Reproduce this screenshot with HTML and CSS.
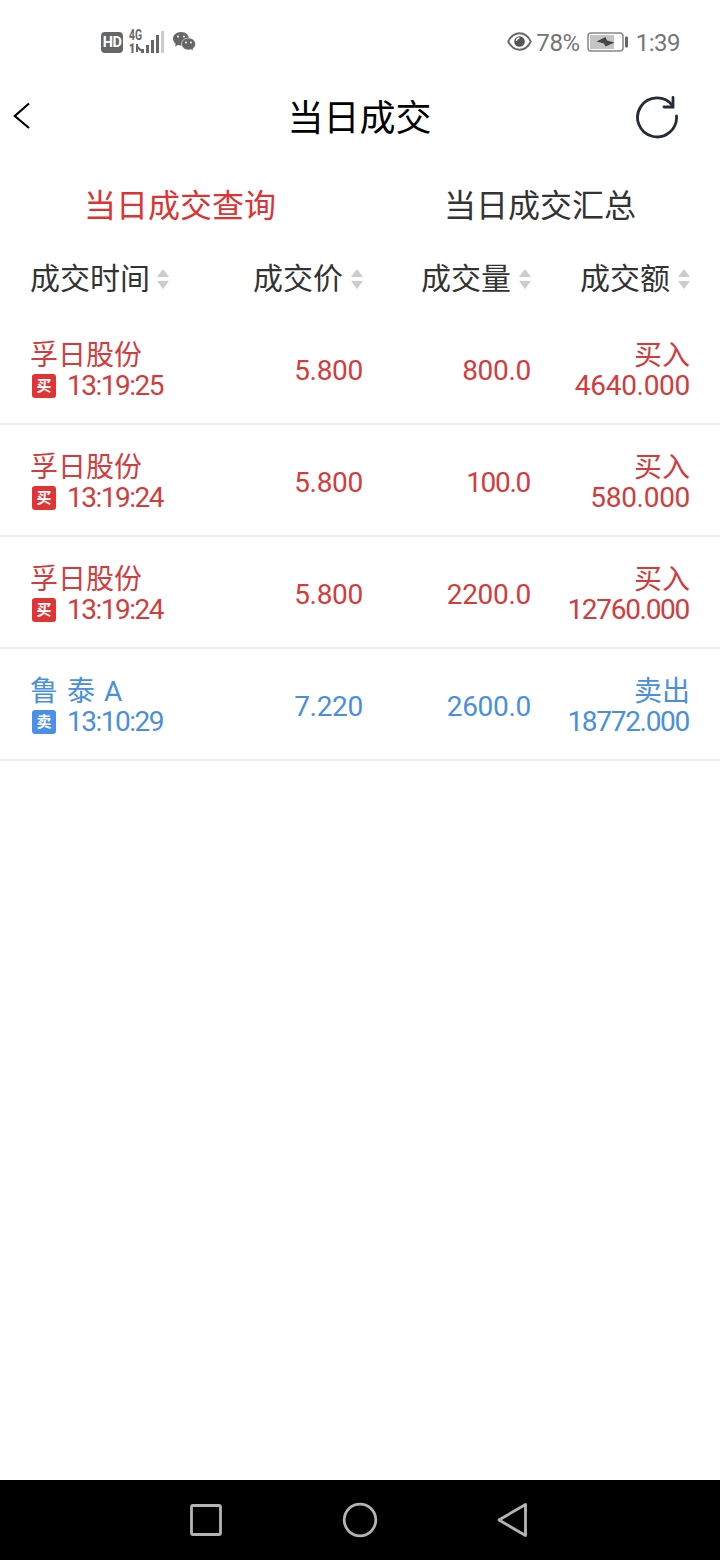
FILE: index.html
```html
<!DOCTYPE html>
<html lang="zh-CN">
<head>
	<meta charset="utf-8">
	<title>当日成交</title>
	<link rel="stylesheet" href="styles.css">
</head>
<body>
	<div class="page">
		<div class="status">
			<div class="status-left">
				<span class="hd">HD</span>
				<svg class="signal" width="36" height="32" viewBox="0 -3 36 32">
					<text class="net" x="0" y="11" textLength="13" lengthAdjust="spacingAndGlyphs">4G</text>
					<path d="M1 17L3.500 15.500V24M8 15V23M8 17.500L12 21.500" fill="none" stroke="#666" stroke-width="2"/>
					<path d="M12 20h3v4h-3zM17 16h3v8h-3zM22 11h3v13h-3zM27 6h3v18h-3z" fill="#666"/>
					<path d="M32 2h3v22h-3z" fill="#ccc"/>
				</svg>
				<svg class="wechat" width="24" height="22" viewBox="0 0 24 22">
					<path d="M9 1C4.300 1 1 4 1 7.700c0 2 1 3.800 2.700 5L3 15.500l3-1.500c1 .3 2 .4 3 .4 4.500 0 8-2.800 8-6.700S13.500 1 9 1z" fill="#666"/>
					<path d="M16.500 7C12.500 7 9.500 9.800 9.500 13s3 6 7 6c.9 0 1.700-.1 2.500-.4l2.500 1.400-.6-2.300C22.500 16.500 23.500 15 23.500 13c0-3.200-3-6-7-6z" fill="#666" stroke="#fff" stroke-width=".6"/>
					<g fill="#fff"><circle cx="6" cy="5.500" r="1"/><circle cx="12" cy="5.500" r="1"/><circle cx="14" cy="11.500" r=".9"/><circle cx="19" cy="11.500" r=".9"/></g>
				</svg>
			</div>
			<div class="status-right">
				<svg width="25" height="20" viewBox="0 0 25 20">
					<path d="M1.200 9.500C6.500-1.500 18.500-1.500 23.800 9.500C18.500 20.500 6.500 20.500 1.200 9.500z" fill="none" stroke="#666" stroke-width="1.800"/>
					<circle cx="12.500" cy="9.500" r="5.300" fill="#555"/>
					<path d="M12.500 6A3.300 3.300 0 0 0 9.300 9" fill="none" stroke="#fff" stroke-width="1.300"/>
				</svg>
				<span class="percent">78%</span>
				<svg class="battery" width="42" height="20" viewBox="0 0 42 20">
					<rect x="1" y="1" width="35" height="18" rx="3" fill="none" stroke="#888" stroke-width="1.500"/>
					<path d="M3 3h24v14h-24z" fill="#c4c4c4"/>
					<path d="M9.500 9.500L18.500 5L20 8.500L27.500 10.500L18.500 14.500L17 11.500z" fill="#444"/>
					<rect x="38" y="4.500" width="3" height="11" rx="1" fill="#666"/>
				</svg>
				<span class="clock">1:39</span>
			</div>
		</div>

		<div class="navbar">
			<svg class="back" width="20" height="30" viewBox="0 0 20 30">
				<path d="M18 1.500L3.800 14L18 26" fill="none" stroke="#000" stroke-width="2.200"/>
			</svg>
			<div class="title">当日成交</div>
			<svg class="refresh" width="44" height="44" viewBox="0 0 44 44">
				<path d="M41.500 21A19.500 19.500 0 1 1 37.500 10.500" fill="none" stroke="#222b36" stroke-width="2.800" stroke-linecap="round"/>
				<path d="M38 2.500V12H29" fill="none" stroke="#222b36" stroke-width="2.800" stroke-linecap="round"/>
			</svg>
		</div>

		<div class="tabs">
			<div class="tab active">当日成交查询</div>
			<div class="tab">当日成交汇总</div>
		</div>

		<div class="cols head">
			<div>成交时间<span class="sort"></span></div>
			<div class="right">成交价<span class="sort"></span></div>
			<div class="right">成交量<span class="sort"></span></div>
			<div class="right">成交额<span class="sort"></span></div>
		</div>

		<div class="cols row buy">
			<div>
				<div class="name">孚日股份</div>
				<div class="time"><span class="tag">买</span>13:19:25</div>
			</div>
			<div class="right">5.800</div>
			<div class="right">800.0</div>
			<div class="right"><div class="name">买入</div><div class="amount">4640.000</div></div>
		</div>
		<div class="cols row buy">
			<div>
				<div class="name">孚日股份</div>
				<div class="time"><span class="tag">买</span>13:19:24</div>
			</div>
			<div class="right">5.800</div>
			<div class="right tight">100.0</div>
			<div class="right"><div class="name">买入</div><div class="amount">580.000</div></div>
		</div>
		<div class="cols row buy">
			<div>
				<div class="name">孚日股份</div>
				<div class="time"><span class="tag">买</span>13:19:24</div>
			</div>
			<div class="right">5.800</div>
			<div class="right">2200.0</div>
			<div class="right"><div class="name">买入</div><div class="amount tight">12760.000</div></div>
		</div>
		<div class="cols row sell">
			<div>
				<div class="name">鲁 泰 A</div>
				<div class="time"><span class="tag">卖</span>13:10:29</div>
			</div>
			<div class="right">7.220</div>
			<div class="right">2600.0</div>
			<div class="right"><div class="name">卖出</div><div class="amount tight">18772.000</div></div>
		</div>

		<div class="softkeys">
			<svg width="36" height="36" viewBox="0 0 36 36"><rect x="3.500" y="3.500" width="29" height="29" rx="1.500"/></svg>
			<svg width="36" height="36" viewBox="0 0 36 36"><circle cx="18" cy="18" r="15.800"/></svg>
			<svg width="36" height="36" viewBox="0 0 36 36"><path d="M29.500 2.500V33.500L3 18z" stroke-linejoin="round"/></svg>
		</div>
	</div>
</body>
</html>
```
FILE: styles.css
```css
body {
	margin: 0;
	background: #fff;
	color: #333;
	font-family: Roboto, "Noto Sans CJK SC", sans-serif;
}

svg {
	display: block;
	flex: none;
}

.page {
	display: flex;
	flex-direction: column;
	height: 1560px;
}

.status {
	display: flex;
	justify-content: space-between;
	align-items: center;
	height: 84px;
	padding: 0 40px 0 101px;
	color: #747474;
}

.status-left,
.status-right {
	display: flex;
	align-items: center;
}

.hd {
	width: 22px;
	height: 21px;
	border-radius: 4px;
	background: #666;
	color: #fff;
	font-size: 14.5px;
	font-weight: bold;
	line-height: 21px;
	text-align: center;
	letter-spacing: -0.5px;
}

.signal {
	margin-left: 6px;
}

.net {
	font-size: 14px;
	font-weight: bold;
	fill: #666;
}

.wechat {
	margin-left: 7px;
}

.percent {
	margin-left: 4px;
	font-size: 24px;
	letter-spacing: -0.4px;
	line-height: 28px;
	padding-top: 2px;
}

.battery {
	margin: 0 7px;
}

.clock {
	font-size: 24px;
	letter-spacing: -0.5px;
	line-height: 28px;
	padding-top: 2px;
}

.navbar {
	display: flex;
	align-items: center;
	justify-content: space-between;
	height: 66px;
	padding: 0 41px 0 11px;
}

.title {
	padding: 4px 0 0 53px;
	color: #000;
	font-size: 36px;
	line-height: 62px;
}

.tabs {
	display: flex;
	height: 104px;
}

.tab {
	flex: 1;
	padding-top: 1px;
	font-size: 32px;
	line-height: 110px;
	text-align: center;
}

.active {
	color: #dd3333;
}

.cols {
	display: grid;
	grid-template-columns: 193px 140px 168px 159px;
	align-items: center;
	padding: 0 30px;
}

.right {
	text-align: right;
}

.head {
	height: 50px;
	margin-bottom: 9px;
	font-size: 30px;
	line-height: 40px;
}

.head > div {
	display: flex;
	align-items: center;
}

.head .right {
	justify-content: flex-end;
}

.sort {
	display: flex;
	flex-direction: column;
	gap: 4px;
	margin-left: 7px;
}

.head .right .sort {
	margin-left: 8px;
}

.sort::before,
.sort::after {
	content: "";
	border: 0 solid transparent;
	border-width: 0 6.5px 8px;
	border-bottom-color: #ccc;
}

.sort::after {
	border-width: 8px 6.5px 0;
	border-top-color: #ccc;
}

.row {
	height: 104px;
	padding-top: 6px;
	border-bottom: 2px solid #eee;
	font-size: 28px;
	line-height: 30px;
	letter-spacing: -0.3px;
}

.name {
	height: 30px;
	letter-spacing: 0;
	line-height: 30px;
	word-spacing: 2px;
}

.time,
.amount {
	height: 30px;
}

.time {
	display: flex;
	align-items: center;
	letter-spacing: -1.5px;
}

.tight {
	padding-right: 1px;
	letter-spacing: -1.3px;
}

.tag {
	width: 24px;
	height: 24px;
	margin: 0 11px 1px 2px;
	border-radius: 3px;
	color: #fff;
	font-size: 15px;
	font-weight: bold;
	line-height: 24px;
	text-align: center;
	letter-spacing: 0;
}

.buy {
	color: #d23c3c;
}

.buy .tag {
	background: #e03434;
}

.sell {
	color: #4a8fdc;
}

.sell .tag {
	background: #4a90e8;
}

.softkeys {
	display: flex;
	justify-content: center;
	align-items: center;
	gap: 118px;
	height: 80px;
	margin-top: auto;
	background: #000;
}

.softkeys svg {
	fill: none;
	stroke: #b4b4b4;
	stroke-width: 2.8;
}
```
